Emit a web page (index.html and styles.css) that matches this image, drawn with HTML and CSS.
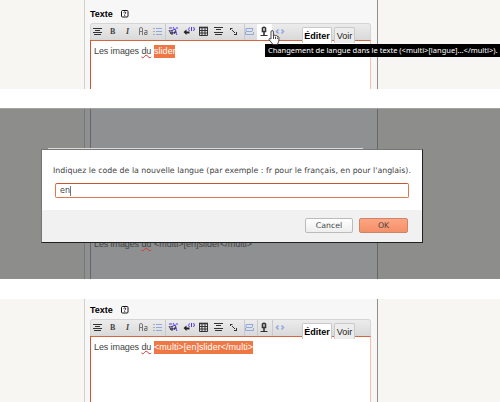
FILE: index.html
```html
<!DOCTYPE html>
<html lang="fr">
<head>
<meta charset="utf-8">
<title>Changement de langue</title>
<link rel="stylesheet" href="styles.css">
</head>
<body>
<svg class="defs" width="0" height="0">
  <symbol id="tools" viewBox="0 0 200 17">
    <g class="ink">
      <path d="M3 5.500h9M5 7.500h5M3 9.500h9M4 11.500h7"/>
      <path d="M124 4.500h9M126 6.500h5M124 9.500h9M125 11.500h7"/>
      <path d="M109.500 4.500h8v8h-8zM109.500 7.500h8M109.500 10h8M112 4.500v8M115 4.500v8"/>
      <path d="M109 4.500h9" class="thick"/>
      <path d="M140 5.500h2.500M140.500 5v2M142 7l3 3M144 11.500h3M146.500 9v3"/>
    </g>
    <g class="grey"><path d="M49.500 12V6q0-1.500 1.500-1.500t1.500 1.500v6M49.500 8.500h3M54.500 7.500h2.500v4h-2.500v-2h2.500"/><path d="M63.500 5.500h1M63.500 8.500h1M63.500 11.500h1"/></g>
    <g class="blue">
      <path d="M66 5.500h6M66 8.500h6M66 11.500h6"/>
      <path d="M156 5.500h7l-1 3h-6zM155.500 9v2.500h8V9"/>
      <path class="code" d="M188.500 6.500l-2 2 2 2M191.500 6.500l2 2-2 2"/>
    </g>
    <path class="violet" d="M79 5h3M83 4l2 3M86 5h2M80 8l6-2M82 10l5-1M85 8l2 4M99.500 4.500q-2 2 0 3.500M101.500 4v4M103.500 4q2 2 0 4"/>
    <path class="ink" d="M79 7l2 4M82 7v5M84 11l2-4M80 10h3"/>
    <path class="solid" d="M93.500 9l3-2.500v2h3v2h-3v1.500z"/>
    <g class="ink"><path class="mic" d="M172.500 5q1.500-1.500 3 0v3.500h-3zM174 9v3"/><path d="M170.500 12.500h7"/></g>
  </symbol>
  <symbol id="help" viewBox="0 0 8 8">
    <rect x=".5" y=".5" width="6.500" height="6.500" rx="1" fill="#fff" stroke="#111"/>
    <path d="M2.500 2.700q1.300-1.500 2.200-.3c.6 1-1 1-1 2M3.700 5.200v.8" fill="none" stroke="#111"/>
  </symbol>
</svg>

<section class="shot first">
  <div class="page">
    <div class="label"><b>Texte</b><svg class="help"><use href="#help"/></svg></div>
    <div class="bar">
      <div class="tools"><i class="sep s1"></i><i class="sep s2"></i><i class="sep s3"></i><i class="hover"></i>
        <svg class="glyphs"><use href="#tools"/></svg><b class="g">B</b><em class="g">I</em></div>
      <div class="tabs"><span class="tab on">Éditer</span><span class="tab">Voir</span></div>
    </div>
    <div class="area"><span>Les images <u>du</u></span><mark class="short">slider</mark></div>
  </div>
  <div class="tip">Changement de langue dans le texte (&lt;multi&gt;[langue]...&lt;/multi&gt;).</div>
  <svg class="hand" viewBox="0 0 12 16"><path d="M3 8V2q0-1.500 1.200-1.500T5.400 2v4q0-1 1-.9t1 1.100q0-.9 1-.7t1 1.100q1.500-.4 1.500 1V11l-1.500 3.500H5L1 9.500q0-2 2-.5z"/><path d="M5.500 6v3M7.500 7v2M9.400 7.500V9"/></svg>
</section>

<section class="shot dim">
  <div class="page"><div class="under"><span>Les images <u>du</u></span><span class="tag">&lt;multi&gt;[en]slider&lt;/multi&gt;</span></div></div>
  <div class="edge"></div>
  <div class="dialog">
    <div class="body">
      <p>Indiquez le code de la nouvelle langue (par exemple : fr pour le français, en pour l'anglais).</p>
      <div class="input">en<i></i></div>
    </div>
    <div class="foot"><span class="btn">Cancel</span><span class="btn ok">OK</span></div>
  </div>
</section>

<section class="shot last">
  <div class="page">
    <div class="label"><b>Texte</b><svg class="help"><use href="#help"/></svg></div>
    <div class="bar">
      <div class="tools"><i class="sep s1"></i><i class="sep s2"></i><i class="sep s3"></i><i class="sep s4"></i>
        <svg class="glyphs"><use href="#tools"/></svg><b class="g">B</b><em class="g">I</em></div>
      <div class="tabs"><span class="tab on">Éditer</span><span class="tab">Voir</span></div>
    </div>
    <div class="area"><span>Les images <u>du</u></span><mark>&lt;multi&gt;[en]slider&lt;/multi&gt;</mark></div>
  </div>
</section>
</body>
</html>
```
FILE: styles.css
```css
* { box-sizing: border-box; }
body { margin: 0; width: 500px; height: 402px; overflow: hidden; background: #fff; font-family: "Liberation Sans", sans-serif; color: #333; }
.defs { position: absolute; }
.shot { position: relative; background: #f7f6f2; padding-left: 84px; overflow: hidden; }
.first { height: 89px; }
.dim { height: 171px; margin-top: 19px; background: #8d8d8b; border-top: 1px solid #a3a3a1; overflow: visible; }
.last { height: 103px; margin-top: 20px; }
.page { width: 294px; height: 100%; background: #f7f7f7; border-left: 1px solid #cfcfcf; border-right: 1px solid #8f8f8b; padding: 8px 6px 0 5px; display: flex; flex-direction: column; }
.last .page { padding-top: 5px; }
.label { height: 15px; display: flex; align-items: center; font-size: 9px; line-height: 12px; color: #000; flex: none; padding-bottom: 3px; }
.label b { width: 31px; letter-spacing: -.05px; }
.help { width: 8px; height: 8px; }
.bar { height: 17px; flex: none; display: flex; border: 1px solid #d5d5d5; border-bottom: 0; border-radius: 3px 3px 0 0; background: linear-gradient(#ececec, #d9d9d9); }
.tools { position: relative; width: 211px; height: 16px; }
.glyphs { position: absolute; left: -1px; top: -1px; width: 200px; height: 17px; }
.ink, .grey, .blue, .violet { fill: none; stroke: #333; stroke-width: 1; }
.grey { stroke: #777; }
.blue { stroke: #8fa8df; }
.violet { stroke: #5038e8; }
.thick, .mic { stroke-width: 1.6; }
.code { stroke-width: 1.5; }
.solid { fill: #222; }
.g { position: absolute; top: 3px; left: 19px; font: bold 8px/10px "Liberation Serif", serif; color: #444; }
em.g { left: 35px; font-style: italic; }
.sep { position: absolute; top: 0; width: 1px; height: 16px; background: #c6c9cf; }
.s1 { left: 74px; }
.s2 { left: 153px; }
.s3 { left: 166px; }
.s4 { left: 181px; }
.hover { position: absolute; left: 166px; top: 0; width: 15px; height: 16px; background: #fff; }
.tabs { display: flex; gap: 2px; padding-top: 3px; height: 20px; z-index: 1; }
.tab { height: 16px; width: 21px; border: 1px solid #c9c9c9; border-bottom: 0; border-radius: 2px 2px 0 0; background: #ededed; font-size: 9px; line-height: 16px; text-align: center; color: #222; white-space: nowrap; }
.tab.on { width: 30px; background: #fff; font-weight: bold; color: #000; }
.area { flex: 1; background: #fff; border: 1px solid #d0532b; border-right-color: #fabfa8; border-bottom: 0; border-top-color: #d96540; padding: 4px 0 0 3px; display: flex; align-items: flex-start; font-size: 9px; line-height: 13px; color: #444; white-space: nowrap; }
.area > span, .under > span:first-child { width: 60px; letter-spacing: -.1px; }
u { text-decoration: underline wavy #d33 .5px; text-underline-offset: 0; }
mark { background: #ef7744; color: #fff; width: 99px; height: 13px; letter-spacing: .04px; }
.short { width: 21px; }
.tip { position: absolute; left: 265px; top: 44px; width: 235px; height: 13px; background: #000; color: #fff; font: 7.5px/13px "Noto Sans", sans-serif; padding-left: 3px; white-space: nowrap; }
.hand { position: absolute; left: 268px; top: 30px; width: 12px; height: 16px; fill: #fff; stroke: #333; stroke-width: .9; }
.dim .page { padding-top: 0; background: #8e9091; border-left-color: #777; border-right-color: #666; }
.under { flex: 1; border-left: 1px solid #666; padding: 129px 0 0 3px; display: flex; font-size: 9px; line-height: 13px; color: #444; white-space: nowrap; }
.edge { position: absolute; left: 48px; top: 39px; width: 315px; height: 1px; background: #ddd; }
.dialog { position: absolute; left: 41px; top: 40px; width: 382px; height: 94px; border: 1px solid #777; border-right: 1px solid #222; border-bottom: 1px solid #222; background: #fff; display: flex; flex-direction: column; color: #444; }
.body { height: 60px; padding: 14px 13px 0 11px; }
.dialog p { margin: 0 0 5px; font: 7.83px/14px "DejaVu Sans", sans-serif; white-space: nowrap; }
.input { margin-left: 2px; width: 354px; height: 15px; border: 1px solid #dc7754; border-top-color: #c9552f; border-radius: 2px; padding-left: 4px; display: flex; align-items: center; font: 8px/12px "DejaVu Sans", sans-serif; }
.input i { width: 1px; height: 10px; background: #777; }
.foot { flex: 1; background: #f1f1f1; display: flex; justify-content: flex-end; gap: 6px; padding: 8px 14px 0 0; }
.btn { width: 48px; height: 15px; border: 1px solid #bbb; border-radius: 2px; background: linear-gradient(#fff, #eee); font: 7.8px/13px "DejaVu Sans", sans-serif; text-align: center; }
.ok { width: 49px; border-color: #c9866b; background: linear-gradient(#ffa583, #f49068); }
```
